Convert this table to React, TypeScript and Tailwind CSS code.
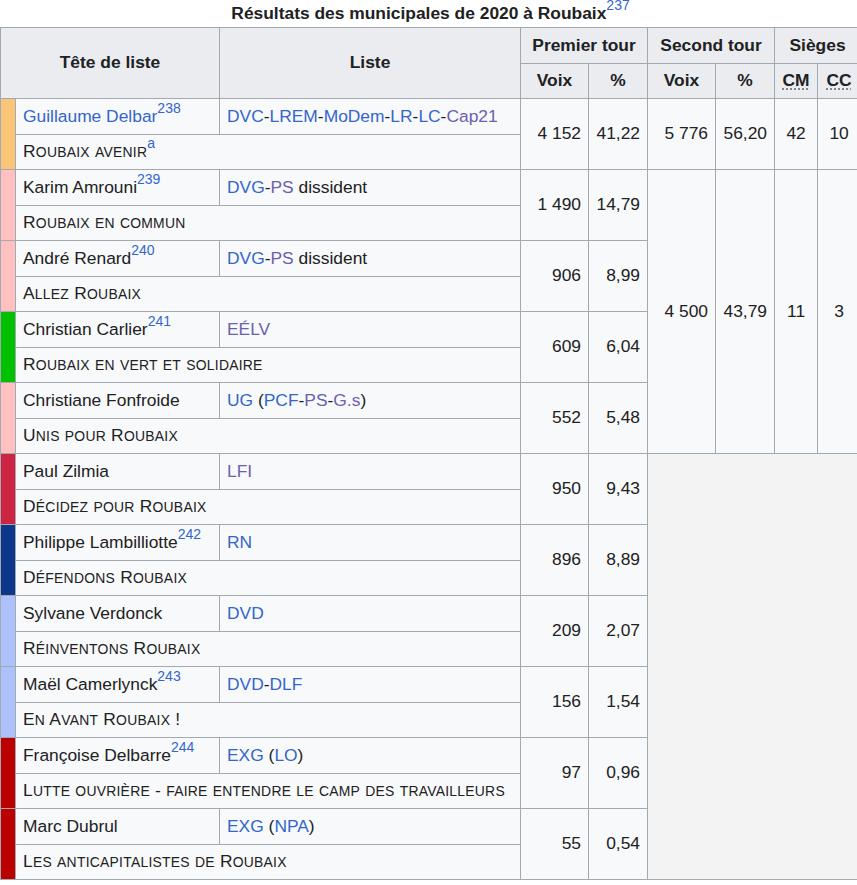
import { Fragment } from 'react';

type Seg = [string, 'b' | 'p' | 'n'];

interface Row {
  bar: string;
  name: string;
  nameLink?: boolean;
  nameRef?: string;
  parties: Seg[];
  list: string;
  listRef?: string;
  voix: string;
  pct: string;
}

const segColor = { b: 'text-[#3366cc]', p: 'text-[#6a60b0]', n: '' };

const rows: Row[] = [
  {
    bar: 'bg-[#fac577]',
    name: 'Guillaume Delbar',
    nameLink: true,
    nameRef: '238',
    parties: [['DVC', 'b'], ['-', 'n'], ['LREM', 'b'], ['-', 'n'], ['MoDem', 'b'], ['-', 'n'], ['LR', 'b'], ['-', 'n'], ['LC', 'b'], ['-', 'n'], ['Cap21', 'p']],
    list: 'Roubaix avenir',
    listRef: 'a',
    voix: '4\u00a0152',
    pct: '41,22',
  },
  {
    bar: 'bg-[#ffc0c0]',
    name: 'Karim Amrouni',
    nameRef: '239',
    parties: [['DVG', 'b'], ['-', 'n'], ['PS', 'p'], [' dissident', 'n']],
    list: 'Roubaix en commun',
    voix: '1\u00a0490',
    pct: '14,79',
  },
  {
    bar: 'bg-[#ffc0c0]',
    name: 'André Renard',
    nameRef: '240',
    parties: [['DVG', 'b'], ['-', 'n'], ['PS', 'p'], [' dissident', 'n']],
    list: 'Allez Roubaix',
    voix: '906',
    pct: '8,99',
  },
  {
    bar: 'bg-[#00c000]',
    name: 'Christian Carlier',
    nameRef: '241',
    parties: [['EÉLV', 'p']],
    list: 'Roubaix en vert et solidaire',
    voix: '609',
    pct: '6,04',
  },
  {
    bar: 'bg-[#ffc0c0]',
    name: 'Christiane Fonfroide',
    parties: [['UG', 'b'], [' (', 'n'], ['PCF', 'b'], ['-', 'n'], ['PS', 'p'], ['-', 'n'], ['G.s', 'p'], [')', 'n']],
    list: 'Unis pour Roubaix',
    voix: '552',
    pct: '5,48',
  },
  {
    bar: 'bg-[#cc2443]',
    name: 'Paul Zilmia',
    parties: [['LFI', 'p']],
    list: 'Décidez pour Roubaix',
    voix: '950',
    pct: '9,43',
  },
  {
    bar: 'bg-[#0d378a]',
    name: 'Philippe Lambilliotte',
    nameRef: '242',
    parties: [['RN', 'b']],
    list: 'Défendons Roubaix',
    voix: '896',
    pct: '8,89',
  },
  {
    bar: 'bg-[#adc1fd]',
    name: 'Sylvane Verdonck',
    parties: [['DVD', 'b']],
    list: 'Réinventons Roubaix',
    voix: '209',
    pct: '2,07',
  },
  {
    bar: 'bg-[#adc1fd]',
    name: 'Maël Camerlynck',
    nameRef: '243',
    parties: [['DVD', 'b'], ['-', 'n'], ['DLF', 'b']],
    list: 'En Avant Roubaix !',
    voix: '156',
    pct: '1,54',
  },
  {
    bar: 'bg-[#bb0000]',
    name: 'Françoise Delbarre',
    nameRef: '244',
    parties: [['EXG', 'b'], [' (', 'n'], ['LO', 'b'], [')', 'n']],
    list: 'Lutte ouvrière - faire entendre le camp des travailleurs',
    voix: '97',
    pct: '0,96',
  },
  {
    bar: 'bg-[#bb0000]',
    name: 'Marc Dubrul',
    parties: [['EXG', 'b'], [' (', 'n'], ['NPA', 'b'], [')', 'n']],
    list: 'Les anticapitalistes de Roubaix',
    voix: '55',
    pct: '0,54',
  },
];

const bd = 'border border-[#a2a9b1]';
const cell = `${bd} bg-[#f8f9fa] px-[7px] py-0 align-middle text-left whitespace-nowrap`;
const num = `${bd} bg-[#f8f9fa] px-[7px] py-0 align-middle text-right whitespace-nowrap`;
const mid = `${bd} bg-[#f8f9fa] px-[7px] py-0 align-middle text-center whitespace-nowrap`;
const head = `${bd} bg-[#eaecf0] px-[7px] py-0 align-middle text-center font-bold whitespace-nowrap`;

const Sup = ({ children }: { children: string }) => (
  <sup className="relative top-[-0.62em] align-baseline text-[14px] leading-none font-normal tracking-normal text-[#3366cc]">{children}</sup>
);

// small caps the way the reference draws them: lowercase shown as capitals at 80%
const SmallCaps = ({ text }: { text: string }) => {
  const runs: { t: string; low: boolean }[] = [];
  for (const ch of text) {
    const low = ch !== ch.toUpperCase();
    const last = runs[runs.length - 1];
    if (last && last.low === low) last.t += ch;
    else runs.push({ t: ch, low });
  }
  return (
    <span className="tracking-[0.25px]">
      {runs.map((r, i) =>
        r.low ? (
          <span key={i} className="text-[0.8em]">{r.t.toUpperCase()}</span>
        ) : (
          <span key={i}>{r.t}</span>
        )
      )}
    </span>
  );
};

export default function App() {
  return (
    <div className="w-[857px] h-[885px] overflow-hidden bg-white font-['Liberation_Sans',Arial,sans-serif] text-[17.4px] leading-[1.6] text-[#202122]">
      <table className="w-[860px] table-fixed border-collapse">
        <caption className="h-[27px] text-center font-bold leading-[27px] whitespace-nowrap">
          Résultats des municipales de 2020 à Roubaix<Sup>237</Sup>
        </caption>
        <colgroup>
          <col className="w-[15px]" />
          <col className="w-[204px]" />
          <col className="w-[301px]" />
          <col className="w-[68px]" />
          <col className="w-[59px]" />
          <col className="w-[68px]" />
          <col className="w-[59px]" />
          <col className="w-[43px]" />
          <col className="w-[43px]" />
        </colgroup>
        <thead>
          <tr className="h-[36px]">
            <th colSpan={2} rowSpan={2} className={head}>Tête de liste</th>
            <th rowSpan={2} className={head}>Liste</th>
            <th colSpan={2} className={head}>Premier tour</th>
            <th colSpan={2} className={head}>Second tour</th>
            <th colSpan={2} className={head}>Sièges</th>
          </tr>
          <tr className="h-[35px]">
            <th className={head}>Voix</th>
            <th className={head}>%</th>
            <th className={head}>Voix</th>
            <th className={head}>%</th>
            <th className={head}>
              <abbr title="Conseillers municipaux" className="underline decoration-dotted underline-offset-[3px] decoration-[#72777d]">CM</abbr>
            </th>
            <th className={head}>
              <abbr title="Conseillers communautaires" className="underline decoration-dotted underline-offset-[3px] decoration-[#72777d]">CC</abbr>
            </th>
          </tr>
        </thead>
        <tbody>
          {rows.map((r, i) => (
            <Fragment key={r.name}>
              <tr className="h-[36px]">
                <td rowSpan={2} className={`${bd} ${r.bar} p-0`} />
                <td className={cell}>
                  <span className={r.nameLink ? 'text-[#3366cc]' : ''}>{r.name}</span>
                  {r.nameRef && <Sup>{r.nameRef}</Sup>}
                </td>
                <td className={cell}>
                  {r.parties.map(([t, c], k) => (
                    <span key={k} className={segColor[c]}>{t}</span>
                  ))}
                </td>
                <td rowSpan={2} className={num}>{r.voix}</td>
                <td rowSpan={2} className={num}>{r.pct}</td>
                {i === 0 && (
                  <>
                    <td rowSpan={2} className={num}>5&nbsp;776</td>
                    <td rowSpan={2} className={num}>56,20</td>
                    <td rowSpan={2} className={mid}>42</td>
                    <td rowSpan={2} className={mid}>10</td>
                  </>
                )}
                {i === 1 && (
                  <>
                    <td rowSpan={8} className={num}>4&nbsp;500</td>
                    <td rowSpan={8} className={num}>43,79</td>
                    <td rowSpan={8} className={mid}>11</td>
                    <td rowSpan={8} className={mid}>3</td>
                  </>
                )}
                {i === 5 && <td rowSpan={12} colSpan={4} className={`${bd} bg-[#f3f3f3]`} />}
              </tr>
              <tr className="h-[35px]">
                <td colSpan={2} className={cell}>
                  <SmallCaps text={r.list} />
                  {r.listRef && <Sup>{r.listRef}</Sup>}
                </td>
              </tr>
            </Fragment>
          ))}
        </tbody>
      </table>
    </div>
  );
}
